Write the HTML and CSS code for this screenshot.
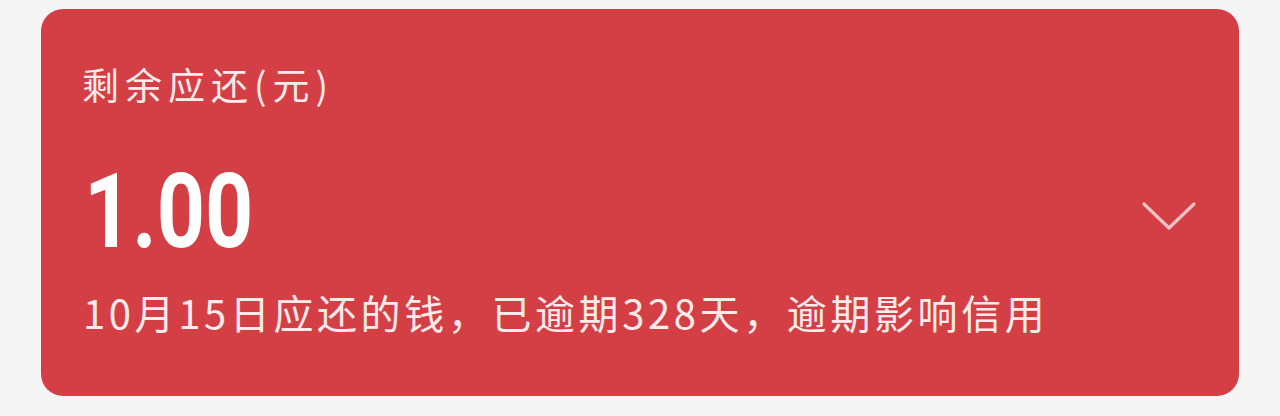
FILE: index.html
```html
<!DOCTYPE html>
<html lang="zh-CN">
<head>
<meta charset="utf-8">
<link rel="stylesheet" href="styles.css">
</head>
<body>
<div class="page">
  <div class="card">
    <div class="label">剩余应还(元)</div>
    <div class="amount-row">
      <div class="amount">1.00</div>
      <svg class="chevron" width="56" height="32" viewBox="0 0 56 32">
        <polyline points="3,4 28,28 53,4" fill="none" stroke="#f3c2c4" stroke-width="3.2" stroke-linecap="round" stroke-linejoin="round"/>
      </svg>
    </div>
    <div class="note">10月15日应还的钱，已逾期328天，逾期影响信用</div>
  </div>
</div>
</body>
</html>
```

FILE: styles.css
```css
html, body {
  margin: 0;
  padding: 0;
  background: #f5f5f5;
}
.page {
  width: 1280px;
  height: 416px;
  box-sizing: border-box;
  padding: 9px 41px 0 41px;
}
.card {
  height: 387px;
  box-sizing: border-box;
  background: #d43f45;
  border-radius: 22px;
  padding: 54px 40px 0 41px;
  display: flex;
  flex-direction: column;
  font-family: "Noto Sans CJK SC", "Noto Sans", sans-serif;
}
.label {
  font-size: 37px;
  line-height: 42px;
  letter-spacing: 6px;
  color: #fbeaea;
}
.amount-row {
  display: flex;
  align-items: center;
  justify-content: space-between;
  margin-top: 55px;
  height: 104px;
}
.amount {
  font-family: Roboto, "Liberation Sans", sans-serif;
  font-weight: 700;
  font-size: 104px;
  line-height: 104px;
  color: #ffffff;
  transform: scaleX(0.81);
  transform-origin: left center;
  margin-left: 2px;
}
.chevron {
  display: block;
  margin-right: 2px;
  margin-top: 8px;
}
.note {
  margin-top: 26px;
  font-size: 40px;
  line-height: 44px;
  letter-spacing: 3.6px;
  color: #fbeaea;
  margin-left: 1px;
}
```
